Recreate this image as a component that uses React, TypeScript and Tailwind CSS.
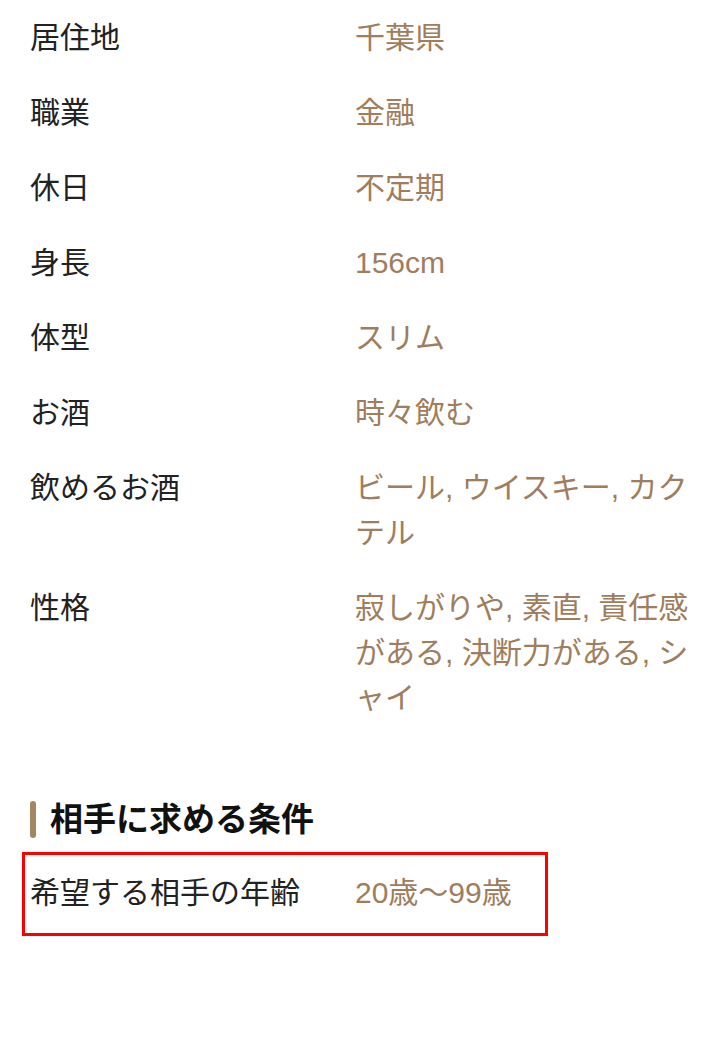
import React from 'react';

type Row = { label: string; value: string };

const rows: Row[] = [
  { label: '居住地', value: '千葉県' },
  { label: '職業', value: '金融' },
  { label: '休日', value: '不定期' },
  { label: '身長', value: '156cm' },
  { label: '体型', value: 'スリム' },
  { label: 'お酒', value: '時々飲む' },
  { label: '飲めるお酒', value: 'ビール, ウイスキー, カクテル' },
  { label: '性格', value: '寂しがりや, 素直, 責任感がある, 決断力がある, シャイ' },
];

const font = { fontFamily: '"Liberation Sans", "Noto Sans CJK JP", sans-serif' };

const ProfileRow: React.FC<{ row: Row }> = ({ row }) => (
  <div className="flex py-[15px] text-[30px] leading-[45px]">
    <div className="w-[325px] shrink-0 text-[#222222]">{row.label}</div>
    <div className="flex-1 pr-[30px] text-[#a07d5c]">{row.value}</div>
  </div>
);

export default function App() {
  return (
    <div className="w-[720px] min-h-[1040px] bg-white" style={font}>
      {/* Profile table */}
      <div className="pl-[30px]">
        {rows.map((row, i) => (
          <ProfileRow key={i} row={row} />
        ))}
      </div>

      {/* Preferred partner section */}
      <div className="mt-[62px] pl-[30px] flex items-center gap-[14px]">
        <div className="w-[6px] h-[37px] rounded-full bg-[#a5875f]"></div>
        <h2 className="text-[33px] leading-[45px] font-bold text-[#111111]">相手に求める条件</h2>
      </div>
      <div className="mt-[10px] ml-[22px] w-[526px] border-[3px] border-[#ff0000] pl-[5px] pb-[3px]">
        <div className="flex py-[15px] text-[30px] leading-[45px]">
          <div className="w-[325px] shrink-0 text-[#222222]">希望する相手の年齢</div>
          <div className="flex-1 text-[#a07d5c]">20歳〜99歳</div>
        </div>
      </div>
    </div>
  );
}
